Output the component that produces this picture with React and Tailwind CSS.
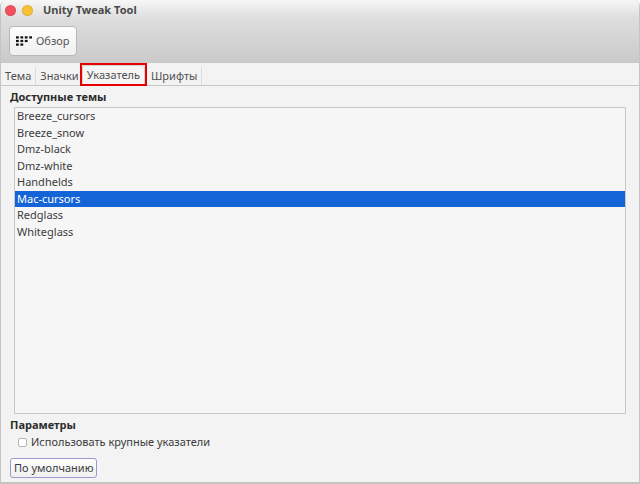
import { useState } from 'react';

const THEMES = [
  'Breeze_cursors',
  'Breeze_snow',
  'Dmz-black',
  'Dmz-white',
  'Handhelds',
  'Mac-cursors',
  'Redglass',
  'Whiteglass',
];

const TABS = ['Тема', 'Значки', 'Указатель', 'Шрифты'];

const OverviewIcon = () => (
  <svg className="w-4 h-[10px] shrink-0" viewBox="0 0 16 10" fill="#111" aria-hidden="true">
    {[0, 4.4, 8.8].map((x) => (
      <g key={x}>
        <rect x={x} y="0.3" width="2.8" height="2.2" />
        <rect x={x} y="3.9" width="2.8" height="2.2" />
        {x < 8 && <rect x={x} y="7.5" width="2.8" height="2.2" />}
      </g>
    ))}
    <rect x="13.2" y="0.3" width="2.8" height="2.2" />
  </svg>
);

const App = () => {
  const [tab, setTab] = useState('Указатель');
  const [theme, setTheme] = useState('Mac-cursors');
  const [large, setLarge] = useState(false);

  return (
    <div className="min-h-screen flex flex-col bg-[#f3f3f3] text-[#3c3c3c] text-[11px] leading-4 font-['Noto_Sans','Open_Sans',sans-serif] border-x border-b-2 border-[#c4c4c4] overflow-hidden rounded-t-md">
      <header className="bg-linear-to-b from-[#f7f7f7] via-[#dddddd] via-30% to-[#cacaca] px-2 pb-[7px]">
        <div className="flex items-center h-[26px] pb-[6px] -ml-[3px]">
          <button aria-label="Закрыть" className="w-[9px] h-[9px] rounded-full bg-[#f4505c] ring-1 ring-[#dc4a54]"></button>
          <button aria-label="Свернуть" className="w-[9px] h-[9px] ml-2 rounded-full bg-[#f9c235] ring-1 ring-[#e0ad38]"></button>
          <h1 className="ml-[11px] font-bold text-[#4a4a4a]">Unity Tweak Tool</h1>
        </div>
        <button className="flex items-center gap-1 h-[30px] px-[6px] rounded-[4px] border border-[#b8b8b8] bg-linear-to-b from-[#fdfdfd] to-[#f0f0f0] text-[#555]">
          <OverviewIcon />
          Обзор
        </button>
      </header>

      <div role="tablist" className="flex items-end h-[23px] border-b border-[#c6c6c6] text-[#505050]">
        {TABS.map((name) => {
          const active = tab === name;
          return (
            <button
              key={name}
              role="tab"
              aria-selected={active}
              onClick={() => setTab(name)}
              className={
                active
                  ? 'relative h-[23px] -mb-px -ml-1 border-2 border-[#e60000] bg-[#f5f5f5]'
                  : 'h-[18px] px-1 border-r border-[#dcdcdc]'
              }
            >
              {active ? (
                <span className="flex items-center h-full px-1 rounded-t-[3px] border-x border-t border-[#d4d4d4]">{name}</span>
              ) : (
                name
              )}
            </button>
          );
        })}
      </div>

      <main className="flex-1 flex flex-col px-[9px] pt-[3px] pb-1">
        <h2 className="font-bold text-[#2c2c2c]">Доступные темы</h2>
        <ul role="listbox" aria-label="Доступные темы" className="flex-1 mt-[2px] ml-1 mr-1 border border-[#c8c8c8] bg-[#f6f6f6]">
          {THEMES.map((name) => (
            <li
              key={name}
              role="option"
              aria-selected={theme === name}
              onClick={() => setTheme(name)}
              className={`odd:h-[17px] even:h-4 px-[2px] ${theme === name ? 'bg-[#1464d8] text-white' : ''}`}
            >
              {name}
            </li>
          ))}
        </ul>
        <h2 className="mt-[3px] font-bold text-[#2c2c2c]">Параметры</h2>
        <label className="flex items-center gap-1 mt-[1px] ml-2">
          <input
            type="checkbox"
            checked={large}
            onChange={(e) => setLarge(e.target.checked)}
            className="appearance-none w-[9px] h-[9px] rounded-[2px] border border-[#b4b4b4] bg-white checked:bg-[#1464d8]"
          />
          Использовать крупные указатели
        </label>
        <button className="self-start h-5 mt-2 px-[3px] rounded-[3px] border border-[#9a9ad0] bg-linear-to-b from-[#fdfdfd] to-[#f1f1f1]">
          По умолчанию
        </button>
      </main>
    </div>
  );
};

export default App;
